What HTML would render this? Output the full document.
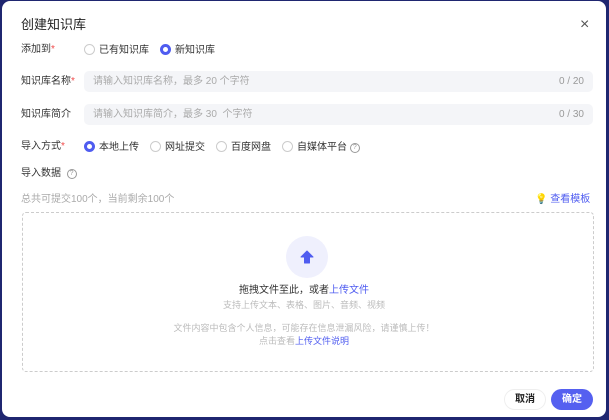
<!DOCTYPE html>
<html><head><meta charset="utf-8"><style>
*{margin:0;padding:0;box-sizing:border-box}
body{width:609px;height:420px;background:#1f2670;font-family:"Liberation Sans","Noto Sans CJK SC",sans-serif;position:relative;overflow:hidden}
.dlg{position:absolute;left:2px;top:1px;width:604px;height:416px;background:#fff;border-radius:8px}
.a{position:absolute;white-space:nowrap;line-height:1.2}
.lbl{font-size:10px;color:#333}
.req{color:#f04a4a}
.inp{position:absolute;left:82px;width:509px;height:21px;background:#f4f5f8;border-radius:5px;font-size:10px;color:#aaa;line-height:21px;padding-left:9px}
.inp span{position:absolute;right:9px;color:#999}
.r{display:inline-block;width:11px;height:11px;border:1px solid #ccc;border-radius:50%;vertical-align:-2px;margin-right:4px;background:#fff}
.r.on{border:3px solid #4f5cf0}
.opt{position:absolute;font-size:10px;color:#333;line-height:1.2}
.q{display:inline-block;width:10px;height:10px;border:1px solid #999;border-radius:50%;font-size:7px;line-height:8px;text-align:center;color:#999;vertical-align:-1px;position:relative;top:-2px}
.blue{color:#4f5cf0}
</style></head><body>
<div class="dlg">
<div class="a" style="left:19px;top:16px;font-size:13px;color:#222">创建知识库</div>
<div class="a" style="left:578px;top:14px;font-size:16px;color:#555;font-weight:300">×</div>
<div class="a lbl" style="left:19px;top:43px">添加到<span class="req">*</span></div>
<div class="opt" style="left:82px;top:43px"><span class="r"></span>已有知识库</div>
<div class="opt" style="left:158px;top:43px"><span class="r on"></span>新知识库</div>
<div class="a lbl" style="left:19px;top:75px">知识库名称<span class="req">*</span></div>
<div class="inp" style="top:70px"><div style="position:absolute;left:9px;top:5px;line-height:12px">请输入知识库名称，最多 20 个字符</div><span style="top:5px;line-height:12px">0 / 20</span></div>
<div class="a lbl" style="left:19px;top:108px">知识库简介</div>
<div class="inp" style="top:103px"><div style="position:absolute;left:9px;top:5px;line-height:12px">请输入知识库简介，最多 30&nbsp; 个字符</div><span style="top:5px;line-height:12px">0 / 30</span></div>
<div class="a lbl" style="left:19px;top:140px">导入方式<span class="req">*</span></div>
<div class="opt" style="left:82px;top:140px"><span class="r on"></span>本地上传</div>
<div class="opt" style="left:148px;top:140px"><span class="r"></span>网址提交</div>
<div class="opt" style="left:214px;top:140px"><span class="r"></span>百度网盘</div>
<div class="opt" style="left:280px;top:140px"><span class="r"></span>自媒体平台 <span class="q">?</span></div>
<div class="a lbl" style="left:19px;top:167px">导入数据 &nbsp;<span class="q">?</span></div>
<div class="a" style="left:19px;top:193px;font-size:10px;color:#aaa">总共可提交100个，当前剩余100个</div>
<div class="a" style="left:533px;top:193px;font-size:10px" ><span style="color:#f5c518">💡</span> <span class="blue">查看模板</span></div>
<div class="a" style="left:20px;top:211px;width:572px;height:160px;border:1px dashed #ccc;border-radius:4px"></div>
<div class="a" style="left:284px;top:235px;width:42px;height:42px;border-radius:50%;background:#eff0fd"></div>
<svg class="a" style="left:297px;top:248px" width="16" height="16" viewBox="0 0 16 16"><path d="M8 2 L14 8 L10.5 8 L10.5 14 L5.5 14 L5.5 8 L2 8 Z" fill="#4f5cf0" stroke="#4f5cf0" stroke-linejoin="round"/></svg>
<div class="a" style="left:0;width:604px;text-align:center;top:284px;font-size:10px;color:#333">拖拽文件至此，或者<span class="blue">上传文件</span></div>
<div class="a" style="left:0;width:604px;text-align:center;top:299px;font-size:9px;color:#bbb">支持上传文本、表格、图片、音频、视频</div>
<div class="a" style="left:0;width:604px;text-align:center;top:322px;font-size:9px;color:#bbb">文件内容中包含个人信息，可能存在信息泄漏风险，请谨慎上传！</div>
<div class="a" style="left:0;width:604px;text-align:center;top:335px;font-size:9px;color:#bbb">点击查看<span class="blue">上传文件说明</span></div>
<div class="a" style="left:502px;top:388px;width:42px;height:21px;border:1px solid #eee;border-radius:11px;font-size:10px;text-align:center;line-height:19px;color:#222;font-weight:bold">取消</div>
<div class="a" style="left:549px;top:388px;width:42px;height:21px;background:#5560f0;border-radius:11px;font-size:10px;text-align:center;line-height:21px;color:#fff;font-weight:bold">确定</div>
</div>
</body></html>
